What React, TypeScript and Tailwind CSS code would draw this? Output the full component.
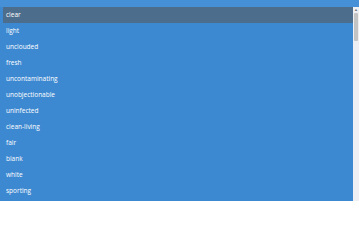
const words = [
  'clear',
  'light',
  'unclouded',
  'fresh',
  'uncontaminating',
  'unobjectionable',
  'uninfected',
  'clean-living',
  'fair',
  'blank',
  'white',
  'sporting',
]

export default function App() {
  return (
    <div
      className="flex h-[201px] w-[359px] flex-col overflow-hidden bg-[#3d89d1]"
      style={{ fontFamily: '"Open Sans", "Liberation Sans", sans-serif' }}
    >
      <div className="h-[7px] shrink-0 bg-[#4590d6]" />
      <div className="flex min-h-0 flex-1">
        <div className="flex min-w-0 flex-1 flex-col pl-[3px]">
          {words.map((w, i) => (
            <div
              key={w}
              className={`flex h-[16px] shrink-0 items-center pl-[3px] text-[6.5px] leading-none text-white ${
                i === 0 ? 'bg-[#4d6d8d]' : ''
              }`}
            >
              {w}
            </div>
          ))}
        </div>
        <div className="flex w-[6px] shrink-0 flex-col items-center bg-[#eef0f4]">
          <div className="h-[6px] text-[4px] leading-[6px] text-[#777]">▲</div>
          <div className="h-[28px] w-[4px] rounded-[1px] bg-[#c4c4c4]" />
        </div>
      </div>
    </div>
  )
}
